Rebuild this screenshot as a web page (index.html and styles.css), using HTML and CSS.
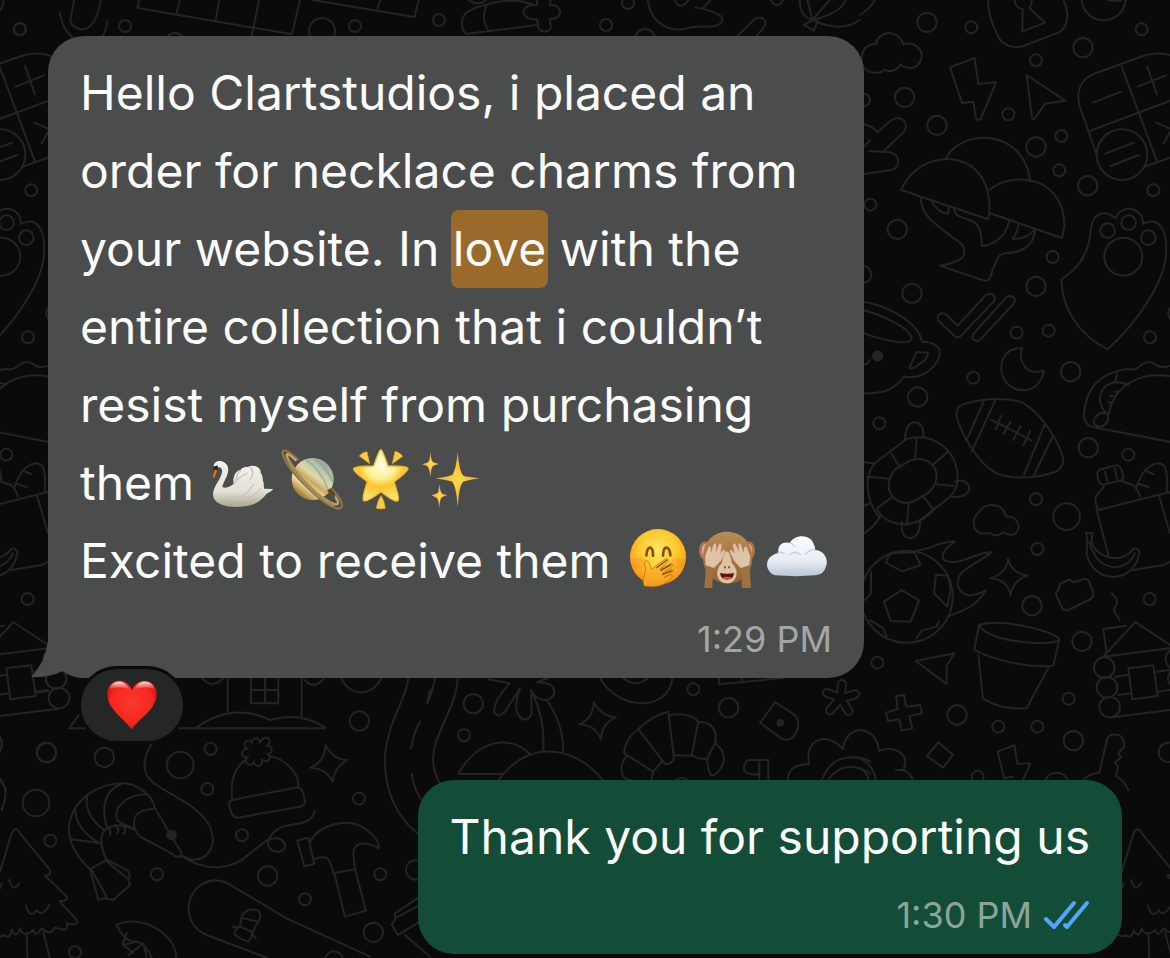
FILE: index.html
```html
<!DOCTYPE html>
<html lang="en">
<head>
<meta charset="utf-8">
<meta name="viewport" content="width=device-width, initial-scale=1">
<title>Chat</title>
<link rel="stylesheet" href="styles.css">
</head>
<body>
<main class="chat">
<svg class="wallpaper" viewBox="0 0 1170 958" preserveAspectRatio="xMinYMin slice" aria-hidden="true">
<g id="edge">
<!-- upper right: clouds, padlock, calculator, mushrooms, paw -->
<g transform="translate(860 0) scale(.3333)">
<circle cx="201" cy="67" r="29"/><circle cx="669" cy="143" r="29"/><circle cx="134" cy="292" r="29"/><circle cx="231" cy="376" r="29"/><circle cx="528" cy="441" r="29"/><circle cx="683" cy="557" r="29"/><circle cx="112" cy="688" r="29"/>
<circle cx="334" cy="82" r="18"/><circle cx="845" cy="88" r="18"/><circle cx="528" cy="181" r="18"/><circle cx="445" cy="343" r="18"/><circle cx="604" cy="408" r="18"/><circle cx="598" cy="511" r="18"/><circle cx="880" cy="571" r="18"/><circle cx="31" cy="614" r="18"/><circle cx="578" cy="771" r="18"/><circle cx="12" cy="300" r="18"/>
<path d="M0 45Q30 25 45 0"/>
<path d="M385 0C382 40 400 80 415 110C430 138 460 146 490 138L595 98C622 85 626 50 618 20L610 0M464 0Q464 20 488 28L487 95L555 68L508 24Q518 12 514 0"/>
<circle cx="731" cy="-5" r="66"/><path d="M745 0Q765 5 785 0"/>
<path d="M48 133C55 90 115 85 130 134C165 120 195 155 182 180C175 207 140 210 120 193C115 212 85 218 74 209C50 230 0 215 5 175C8 145 25 132 48 133Z"/>
<path d="M270 202L344 174L355 252L408 247L363 356Q355 364 348 356L340 305L306 309Z"/>
<path d="M500 225L616 302L555 311L524 356Q519 360 516 354Z"/>
<path d="M0 372Q30 372 52 396L95 360C120 345 150 365 132 395L72 453M28 453L90 457C120 465 125 500 95 510L12 522M12 440L30 420"/>
<path d="M930 165Q890 155 850 168L700 222C665 238 648 270 658 315L710 465M855 500L960 462M785 200L890 482M692 392L990 280M698 308L784 275M833 260L918 226M861 198L891 283M736 461L822 428M751 498L837 465M889 368L935 388L911 430M930 165Q955 172 964 195"/>
<circle cx="786" cy="464" r="76"/>
<path d="M123 570C180 440 380 440 388 610Q390 640 384 658ZM257 476C310 380 490 390 510 538M388 570C460 510 615 530 613 680L606 714L390 640"/>
<path d="M183 592C180 650 240 680 275 710Q315 735 312 750M214 602Q235 640 264 641L268 620M282 627C290 670 350 640 362 700L366 738C410 735 440 700 447 665M476 672Q472 700 458 716Q500 720 524 688M526 690C520 740 480 760 445 758"/>
<path d="M663 780C700 730 685 680 703 655Q730 625 767 655C785 610 850 620 849 672C890 650 920 680 918 745"/>
<circle cx="743" cy="692" r="22"/><circle cx="806" cy="668" r="22"/><circle cx="865" cy="713" r="22"/><circle cx="790" cy="770" r="57"/>
</g>
<!-- middle right: cup, moon, football, taco, turtle, bottle -->
<g transform="translate(860 250) scale(.3333)">
<circle cx="156" cy="130" r="29"/><circle cx="528" cy="109" r="29"/><circle cx="632" cy="365" r="29"/><circle cx="173" cy="441" r="29"/><circle cx="685" cy="593" r="29"/><circle cx="8" cy="73" r="26"/><circle cx="954" cy="190" r="29"/>
<circle cx="470" cy="248" r="18"/><circle cx="566" cy="242" r="18"/><circle cx="870" cy="262" r="18"/><circle cx="340" cy="383" r="18"/><circle cx="58" cy="520" r="18"/><circle cx="528" cy="748" r="18"/><circle cx="805" cy="614" r="18"/><circle cx="620" cy="800" r="40"/>
<path d="M672 20C650 55 630 70 604 88C605 180 660 255 742 298C820 230 925 90 918 -5"/>
<path d="M312 0C320 30 280 40 240 47L370 91Q385 95 390 82C410 30 410 10 445 8Q475 7 490 -3"/>
<path d="M235 212Q228 195 245 190Q253 188 260 195L293 227L378 135Q392 127 402 138Q408 146 400 156L302 258Q293 266 284 258ZM340 252L438 143Q450 132 462 143Q468 152 460 162L360 270Q350 276 340 269Q334 260 340 252Z"/>
<path d="M0 153C80 165 175 215 186 275C220 275 245 290 238 318C225 360 180 388 132 380C100 425 60 432 0 430M0 178C70 195 150 235 155 265C150 290 60 270 0 245M170 306L203 308Q206 315 195 330L165 352Q145 360 150 350ZM0 335Q15 355 30 330"/><circle class="dot" cx="53" cy="318" r="14"/>
<path d="M487 294C400 290 405 420 490 421C525 420 545 395 552 362C500 380 470 330 487 294Z"/>
<path d="M315 461C370 445 430 443 480 455C540 480 600 580 609 625C612 645 600 660 585 666C530 685 460 690 410 670C350 640 300 540 290 500Q285 470 315 461ZM370 457L320 570M405 453L335 605M555 522L492 675M577 562L522 675M392 508L514 571M423 498L408 538M452 515L430 553M482 528L460 570M511 542L490 586"/>
<path d="M940 343Q905 360 885 342Q865 328 840 348Q825 362 800 357C720 370 680 410 672 490Q670 530 710 533L932 576M745 495C765 390 860 365 935 380M805 405C760 385 720 405 720 450Q722 470 735 485M745 495Q745 530 715 530Q690 520 710 497Q730 480 745 495M772 372L765 395M750 437h10M765 425h8M745 457h12"/>
<path d="M140 567C220 545 295 600 293 690Q290 725 265 745L180 810M140 567L50 635C10 670 15 750 60 805M110 655L150 632C200 615 240 650 227 695Q220 720 195 735L160 755C110 770 75 730 90 685Q95 668 110 655ZM170 567L165 625M262 607L222 642M95 612L120 652M22 680L90 686M225 702L280 708M95 742L52 775M188 737L218 775M146 760L141 820M135 567Q138 518 165 517Q192 520 190 560M285 695Q325 685 328 718Q320 745 275 740M12 637L45 641M12 768L30 760"/>
<path d="M712 670Q715 660 725 657L770 646Q785 645 790 685Q790 690 780 692L728 704Q712 700 712 670ZM735 665L742 695M765 655L772 690M733 704Q730 715 710 735Q700 750 715 780M785 693L820 706Q835 720 840 740M830 710C850 650 890 625 915 650Q925 680 920 728M715 780L930 726L960 830M855 662L880 672M838 702L866 711M898 740L930 850"/>
</g>
<!-- lower right: football, pot, cabin, key -->
<g transform="translate(860 510) scale(.3333)">
<circle cx="516" cy="287" r="29"/><circle cx="666" cy="394" r="29"/><circle cx="291" cy="615" r="29"/><circle cx="640" cy="692" r="29"/><circle cx="925" cy="727" r="29"/><circle cx="590" cy="825" r="37"/>
<circle cx="532" cy="117" r="18"/><circle cx="869" cy="267" r="18"/><circle cx="52" cy="458" r="18"/><circle cx="626" cy="566" r="18"/><circle cx="415" cy="650" r="18"/><circle cx="532" cy="650" r="18"/><circle cx="353" cy="800" r="18"/>
<path d="M52 0Q80 45 145 43Q190 35 220 0M126 35Q120 80 150 85Q180 80 180 35M12 70Q45 50 62 15"/>
<path d="M360 2C380 -25 430 -20 438 20C470 15 490 55 465 70Q450 80 430 66Q410 85 390 68C340 85 325 30 360 2"/>
<path d="M710 0L745 135M820 180L910 165Q928 160 940 145M678 68L698 70Q695 85 695 100C720 150 790 160 818 118Q830 110 838 125C830 220 700 230 680 130L682 95ZM688 95C710 190 800 190 825 130"/>
<circle cx="140" cy="260" r="138"/>
<path d="M125 240L177 272L152 335L92 333L72 275ZM90 130L163 127L182 165L127 184L77 158ZM228 194L264 197L272 240L262 290L222 250ZM33 185V250L15 270M30 330L70 355L80 380M237 333L230 350L185 362L170 385"/>
<path d="M170 122C220 115 250 90 285 95C230 135 240 160 290 155C340 145 360 125 395 127C330 175 290 180 293 225C305 265 340 260 376 242C350 290 310 300 268 318"/>
<path d="M444 147Q455 190 503 197Q460 210 451 256Q445 210 392 205Q440 190 444 147Z"/>
<path d="M600 222L628 208L640 217L675 206Q683 206 688 215L700 250Q702 260 692 267L625 300Q612 305 605 290L588 255Q588 245 595 240Z"/>
<path d="M755 250Q778 270 768 285Q755 305 772 318L779 332"/>
<path d="M357 345C420 325 580 360 598 388C590 410 380 400 357 345L343 420C400 450 500 475 580 467L598 388M355 435L369 565Q420 600 500 595L567 470"/>
<path d="M167 453L284 430L260 467L260 522Z"/>
<path d="M108 558L132 555L138 590L180 585L186 610L148 618L157 655L125 662L118 628L84 634L78 608L113 598Z"/>
<path d="M730 440L826 336L930 405M730 440L930 415M740 430L730 357L798 347M765 500L805 495M890 485L930 480M773 555L813 550M892 545L930 540M805 475L880 466L893 558L817 568ZM755 622L930 600"/>
<circle cx="733" cy="473" r="31"/><circle cx="741" cy="532" r="31"/><circle cx="749" cy="591" r="31"/><circle cx="948" cy="447" r="31"/><circle cx="955" cy="505" r="31"/>
<path d="M235 697L279 735L249 773L201 738ZM413 725L464 706L472 762L511 760L485 820M413 725L432 805L460 800"/>
<path d="M665 815Q685 790 718 788L742 685Q750 670 775 675Q795 685 792 710L775 730L783 742L765 758L775 772L768 798Q795 815 805 840"/>
<path d="M0 660Q50 665 57 722C110 705 150 735 130 780Q155 790 160 815M0 745Q40 765 48 810M0 775Q20 785 28 812M130 780H108"/>
</g>
</g>
<use href="#edge" x="-1122"/>
<!-- lower left: hut, shrimp, hat, hammer, snowboard -->
<g transform="translate(0 640) scale(.3333)">
<circle cx="168" cy="115" r="31"/><circle cx="177" cy="174" r="31"/><path d="M105 108L140 103M110 158L145 152M140 211L175 207"/>
<circle cx="140" cy="338" r="29"/><circle cx="313" cy="352" r="29"/><circle cx="1078" cy="243" r="29"/><circle cx="803" cy="708" r="29"/><circle cx="1120" cy="877" r="29"/><circle cx="1247" cy="690" r="29"/><circle cx="108" cy="489" r="40"/><circle cx="541" cy="375" r="40"/>
<circle cx="632" cy="327" r="18"/><circle cx="622" cy="447" r="18"/><circle cx="726" cy="586" r="18"/><circle cx="151" cy="602" r="18"/><circle cx="471" cy="703" r="18"/><circle cx="1077" cy="476" r="18"/><circle cx="1141" cy="703" r="18"/><circle cx="915" cy="778" r="18"/><circle cx="225" cy="937" r="18"/><circle cx="1002" cy="960" r="26"/>
<path d="M207 265H975M207 265L245 215M590 262C640 225 720 195 810 240Q900 215 975 262M683 115V215M905 115V230M753 115V190H835V115M795 115V190M753 150H835M605 112Q635 150 670 115M915 120Q940 150 970 118M1022 112Q1045 158 1085 157Q1125 155 1145 112"/>
<path d="M1225 115C1220 180 1150 260 1155 380C1160 480 1210 550 1260 585M1290 150L1282 190M1260 245Q1240 280 1233 325M1235 402Q1245 460 1270 485"/>
<path d="M977 316Q1000 360 1043 360Q1003 380 998 426Q980 385 932 383Q975 365 977 316Z"/>
<path d="M455 312C420 370 430 410 470 435C520 470 600 500 630 560C655 620 620 665 570 658L540 645C620 700 700 690 750 640L800 602C850 575 875 630 835 635C790 635 800 590 830 570C860 540 930 570 945 512"/>
<path d="M540 650Q528 655 515 640L420 590C390 560 400 520 430 512L465 505L545 640M465 505C455 455 400 430 370 430C300 430 230 470 210 540C195 600 230 650 270 688L320 660Q300 620 305 590C310 560 350 545 400 568M440 462C370 465 335 510 355 545L400 565M365 432C310 450 305 510 320 560M262 470C250 510 290 560 315 570M225 510C230 570 280 600 300 610M215 598L302 610M270 688L295 780L315 775L340 780L390 735L385 720Q395 700 380 690L322 660M275 690L320 770M322 665L385 718M322 562Q335 570 330 585M345 555Q360 565 352 580M362 555Q385 565 370 582"/><circle class="dot" cx="515" cy="585" r="13"/>
<path d="M697 480C685 390 730 345 790 347C850 345 900 400 895 442M697 480L885 443Q905 440 910 460L915 485Q915 495 900 500L715 533Q698 535 692 510Q680 485 697 480"/>
<path class="petal-out" d="M771 336L797 305M771 336L803 330M771 336L797 352M771 336L774 366M771 336L750 362M771 336L738 340M771 336L746 314M771 336L768 307"/><path class="petal-in" d="M771 336L797 305M771 336L803 330M771 336L797 352M771 336L774 366M771 336L750 362M771 336L738 340M771 336L746 314M771 336L768 307"/>
<path d="M892 602L925 593L943 672L913 679ZM930 605C960 550 1050 530 1100 570Q1140 600 1137 625C1090 600 1060 610 1060 640L1065 688L1000 700C990 650 980 645 940 657M1003 700L1035 830L1098 812L1065 688"/>
<path d="M800 953L620 885C560 860 550 790 590 745Q640 700 700 740L860 835L1110 950M705 885Q700 870 720 860L725 830Q740 800 775 812Q790 830 765 860L750 900Q740 910 705 885ZM720 860L755 875M730 835L772 845M698 860L712 862M755 880L768 895"/>
<path id="tree" d="M0 695L35 580Q48 555 60 580L150 690Q155 705 135 707L200 770Q205 785 178 783L230 840Q240 860 200 850Q210 880 165 862Q150 890 125 865Q105 895 100 870Q70 895 60 865Q50 900 35 870Q30 900 10 885Q5 895 -20 880Q-40 895 -50 860M80 880L82 953M130 880L150 953M27 720Q40 760 57 730M78 797Q90 840 110 810Q125 835 148 795M0 745L5 730"/>
<use href="#tree" x="3366"/>
<path d="M350 855C420 820 530 880 528 953M350 855Q370 900 400 905Q430 900 455 953M370 915L410 905M385 945L430 910M380 880L368 912L400 940M430 910L440 953"/>
<path d="M1260 770L1185 820V835L1260 795M1185 838L1175 855L1195 885L1260 845M1215 885L1290 950M0 290Q10 310 0 335M0 415Q30 450 5 510"/>
</g>
<!-- between the bubbles: palm, croissant, tag, flower -->
<g transform="translate(420 650) scale(.3333)">
<circle cx="160" cy="161" r="29"/><circle cx="926" cy="173" r="29"/><circle cx="132" cy="256" r="18"/><circle cx="820" cy="118" r="18"/>
<path d="M205 88L268 100Q225 150 222 180Q230 210 255 185L300 115Q280 170 295 195Q320 225 335 190L333 120C350 160 405 160 403 120Q395 95 350 97L385 84M335 125Q375 200 370 305M380 150Q430 220 430 305M235 392C310 280 450 270 550 392M115 372C170 270 270 250 333 315M115 372H250M113 84C110 180 30 260 40 340Q42 370 60 400M45 84Q40 120 22 160"/>
<path d="M522 157Q545 200 588 202Q545 220 543 268Q525 225 478 223Q520 205 522 157Z"/>
<path d="M540 84C600 190 750 180 757 84M610 84Q645 115 685 84M897 84V103L1090 84M965 84v10"/>
<path d="M655 237Q700 195 745 185L762 325Q755 345 735 342ZM750 195Q810 185 835 215Q880 215 888 255L885 280Q925 310 905 350Q890 380 872 375Q860 350 862 325Q840 330 820 318L765 316M655 237Q615 265 612 310L700 365L725 335M620 318Q595 350 610 380Q620 390 650 395M700 365L692 395M835 215L815 318M888 275L862 325M765 392Q785 375 805 392"/>
<path d="M1066 157L1125 195Q1150 230 1115 265Q1095 275 1080 262L1020 218Z"/><circle class="dot" cx="1081" cy="218" r="8"/>
<path class="petal-out" d="M1262 145L1266 102M1262 145L1305 133M1262 145L1286 183M1262 145L1230 181M1262 145L1221 128"/><path class="petal-in" d="M1262 145L1266 102M1262 145L1305 133M1262 145L1286 183M1262 145L1230 181M1262 145L1221 128"/>
<path d="M1103 390C1105 350 1140 340 1168 343C1150 270 1220 240 1268 297Q1280 240 1325 240M1205 390Q1230 325 1290 322Q1330 322 1350 335M1225 390Q1250 350 1295 350Q1330 355 1350 370M1045 390V330H985Q965 345 975 365Q985 375 1015 373M1018 330V390"/>
</g>
<!-- top edge -->
<g transform="translate(60 0) scale(.5102 .3333)">
<path d="M28 0L20 60Q25 88 45 88Q70 85 80 0M0 40Q5 90 25 112M92 62Q92 90 82 112M155 0L152 24L455 103L470 0M235 0L228 42M312 0L305 62M390 0L376 108M495 0L695 51L703 0M628 0L622 26"/>
<path d="M795 102Q780 70 795 40Q810 22 835 15Q860 0 900 3L925 12M800 0Q820 20 835 0M795 102L935 75M835 18Q825 60 840 92M935 0V15Q910 15 908 35Q912 60 935 58L938 85Q950 105 962 85L960 58Q982 55 980 35Q978 12 960 15L962 0"/>
<path d="M1152 0C1155 50 1180 95 1220 88Q1240 78 1265 80Q1300 80 1298 55Q1295 38 1245 22M1205 0Q1215 35 1232 0M1275 0L1260 25M1328 108L1358 62Q1375 42 1383 65Q1383 80 1365 108M1450 0Q1450 50 1475 60L1508 0M1475 60Q1530 40 1540 0M1475 60Q1530 100 1568 60M1475 60L1458 75L1478 92L1485 62M1465 0L1475 60"/>
</g>
<circle cx="125" cy="26" r="6"/><circle cx="355" cy="26" r="6"/><circle cx="439" cy="20" r="6"/><circle cx="606" cy="25" r="6"/><circle cx="628" cy="3" r="6"/><circle cx="777" cy="-1" r="6"/><circle cx="322" cy="31" r="13"/><circle cx="175" cy="43" r="10"/><circle cx="645" cy="39" r="10"/><circle cx="20" cy="29" r="6"/>
</svg>

<article class="message incoming">
<svg class="tail" viewBox="0 0 60 60" aria-hidden="true"><path d="M18 0V22C16 38 11 48 1 59Q19 60 33 53Q42 60 54 60H60V0Z"/></svg>
<p class="text">Hello Clartstudios, i placed an order for necklace charms from your website. In <mark class="match">love</mark> with the entire collection that i couldn’t resist myself from purchasing them<span class="emojis">
<svg class="emoji" viewBox="27 30 192 192" role="img" aria-label="swan">
<defs><linearGradient id="sw" x1="0" y1="0" x2="0" y2="1"><stop stop-color="#f4f2ec"/><stop offset=".65" stop-color="#e4e1d8"/><stop offset="1" stop-color="#aaa58f"/></linearGradient></defs>
<path fill="url(#sw)" d="M38 83C40 66 66 63 78 81C91 103 66 130 64 147C76 153 88 145 98 138C94 121 103 96 119 96C124 85 141 88 149 84C166 80 181 93 179 104C187 113 184 127 188 134L189 152L216 153Q215 158 197 167C180 190 157 207 105 207C66 207 37 194 36 171C36 142 67 119 63 95Q55 80 47 94Z"/>
<path d="M98 139Q111 117 140 105M89 175Q125 190 158 139M104 187Q151 187 180 151M119 96Q105 110 106 128M148 87Q163 105 147 125" fill="none" stroke="#c9c5b8" stroke-width="4"/>
<path fill="#ec6c18" d="M42 94L49 97L40 119L35 116Z"/><path fill="#252525" d="M37 87L45 83L51 83L49 98L42 94L38 101Z"/>
</svg><svg class="emoji" viewBox="237 30 192 192" role="img" aria-label="ringed planet">
<defs><linearGradient id="pl" x1=".85" y1=".1" x2=".25" y2=".9"><stop stop-color="#91a291"/><stop offset=".25" stop-color="#bcc7ae"/><stop offset=".45" stop-color="#ded9a5"/><stop offset=".6" stop-color="#c9a962"/><stop offset=".75" stop-color="#eee0aa"/><stop offset="1" stop-color="#a97e35"/></linearGradient></defs>
<circle cx="335" cy="123" r="63" fill="url(#pl)"/><path d="M315 66Q355 90 382 155M342 64Q374 84 396 132" stroke="#809990" stroke-width="6" opacity=".5" fill="none"/>
<path d="M292 67C258 32 237 28 247 54C263 99 361 199 407 211C438 216 420 178 389 151" fill="none" stroke="#8e7345" stroke-width="7"/><path d="M286 68C261 43 251 42 261 63C285 107 361 187 402 199C421 202 407 177 389 163" fill="none" stroke="#c1a66d" stroke-width="7"/><path d="M262 68C288 112 340 172 398 203" fill="none" stroke="#a88c55" stroke-width="9"/><path d="M388 151Q405 163 402 180L378 158Z" fill="#604421"/>
</svg><svg class="emoji" viewBox="447 30 192 192" role="img" aria-label="glowing star">
<defs><radialGradient id="st" cx=".5" cy=".3" r=".65"><stop stop-color="#fffde9"/><stop offset=".4" stop-color="#fff197"/><stop offset=".65" stop-color="#fcc52b"/><stop offset="1" stop-color="#fae06b"/></radialGradient></defs>
<g fill="#f8cc41" stroke="#e9a51f" stroke-width="2" stroke-linejoin="round"><path d="M475 54Q484 42 498 41L506 77ZM582 40Q597 43 605 55L574 77ZM540 173Q550 187 553 211Q540 214 526 211Q530 187 540 173Z"/></g>
<path fill="url(#st)" stroke="#f4b529" stroke-width="4" stroke-linejoin="round" d="M540 35Q544 34 561 84Q616 83 621 91Q624 98 579 132Q598 184 590 189Q580 193 540 161Q498 193 488 188Q482 180 499 131Q454 99 458 92Q463 84 518 84Q535 33 540 35Z"/>
</svg><svg class="emoji" viewBox="657 30 192 192" role="img" aria-label="sparkles">
<defs><radialGradient id="sp"><stop stop-color="#ffdf54"/><stop offset=".45" stop-color="#ffc12f"/><stop offset="1" stop-color="#e8a262"/></radialGradient></defs>
<path fill="url(#sp)" d="M770 43Q776 111 790 115L836 121Q796 127 786 132Q774 142 770 209Q766 142 752 130L704 121Q742 116 754 111Q765 96 770 43Z"/><path fill="url(#sp)" d="M688 40Q690 70 697 73L714 78Q698 82 694 86Q689 97 688 117Q686 92 679 84L663 79Q681 75 684 70Q687 62 688 40Z"/><path fill="url(#sp)" d="M715 139Q718 166 725 168L739 172Q723 176 719 182Q716 192 715 210Q713 187 708 180L691 172Q709 168 712 163Z"/>
</svg></span><br>Excited to receive them<span class="emojis">
<svg class="emoji" viewBox="21 24 192 192" role="img" aria-label="face with hand over mouth">
<defs><radialGradient id="fa" cx=".5" cy=".38" r=".62"><stop stop-color="#ffe866"/><stop offset=".6" stop-color="#ffc629"/><stop offset="1" stop-color="#f28b16"/></radialGradient><linearGradient id="ha" x1="0" y1="0" x2="0" y2="1"><stop stop-color="#ffc72b"/><stop offset="1" stop-color="#f29a1e"/></linearGradient></defs>
<circle cx="117" cy="117" r="84" fill="url(#fa)"/><ellipse cx="60" cy="136" rx="22" ry="17" fill="#fa7826" opacity=".28"/><ellipse cx="176" cy="136" rx="20" ry="17" fill="#fa7826" opacity=".28"/>
<path d="M82 112Q85 88 93 89Q102 90 102 113M132 113Q133 89 142 89Q153 91 154 112" fill="none" stroke="#8b4b0a" stroke-width="8" stroke-linecap="round"/>
<path fill="url(#ha)" stroke="#b5670c" stroke-width="2" d="M76 204C67 190 78 171 80 153L76 134Q83 121 91 135L98 154L138 123Q149 119 148 130L123 153L155 136Q165 137 161 145L130 166L158 153Q169 154 164 161L136 178L155 170Q163 172 157 181C138 202 110 211 76 204Z"/><path d="M112 150L145 125M124 158L157 140M130 170L160 158" stroke="#864609" stroke-width="4"/>
</svg><svg class="emoji" viewBox="231 24 192 192" role="img" aria-label="see-no-evil monkey">
<defs><linearGradient id="mo" x1="0" y1="0" x2="0" y2="1"><stop stop-color="#b98b56"/><stop offset="1" stop-color="#926335"/></linearGradient></defs>
<ellipse cx="258" cy="98" rx="18" ry="28" fill="#a57545"/><ellipse cx="390" cy="98" rx="18" ry="28" fill="#a57545"/><ellipse cx="258" cy="98" rx="10" ry="20" fill="#ef9fa4"/><ellipse cx="390" cy="98" rx="10" ry="20" fill="#ef9fa4"/>
<path fill="url(#mo)" d="M252 120C250 15 398 15 400 120Q398 193 324 197Q255 190 252 120Z"/><path fill="#ddc3a3" d="M324 100Q335 105 338 135Q359 155 351 177Q342 197 323 196Q301 195 295 174Q292 150 309 135Q312 105 324 100Z"/>
<path fill="#551911" d="M303 165Q324 170 345 165Q344 184 324 185Q305 184 303 165Z"/><ellipse cx="324" cy="180" rx="12" ry="4" fill="#dc4c4b"/><path d="M318 145V151M330 145V151" stroke="#71472f" stroke-width="5"/>
<path fill="#9f7040" d="M256 210L261 138L286 145Q279 175 280 210ZM396 210L391 138L365 145Q369 175 368 210Z"/>
<g fill="#dfc4a8" stroke="#bd9470" stroke-width="1"><path d="M260 142L258 116L268 88Q273 83 276 89L276 104L284 78Q292 73 292 82L291 101L301 77Q309 75 308 83L305 106L313 96Q319 92 318 102L306 128L285 150Z"/><path d="M391 142L394 116L384 88Q378 83 375 89L374 104L365 78Q358 73 358 82L360 101L349 77Q341 75 342 83L346 106L337 96Q332 92 333 102L345 128L365 150Z"/></g>
</svg><svg class="emoji" viewBox="441 24 192 192" role="img" aria-label="cloud">
<defs><linearGradient id="cl" x1="0" y1="0" x2="0" y2="1"><stop stop-color="#fbfdff"/><stop offset=".6" stop-color="#e8edf4"/><stop offset="1" stop-color="#bac7d6"/></linearGradient></defs>
<path fill="url(#cl)" d="M469 172C440 163 435 125 461 112Q469 106 478 105C475 78 494 69 513 75C526 46 579 48 585 82Q590 88 587 96C615 96 630 125 621 145Q616 169 590 172Q530 177 469 172Z"/><path d="M478 105Q487 100 495 106M513 75Q521 77 526 85M511 111Q527 96 544 109M587 96Q570 94 561 108" fill="none" stroke="#cbd5e0" stroke-width="5" stroke-linecap="round"/>
</svg></span></p>
<footer class="meta"><time datetime="13:29">1:29 PM</time></footer>
</article>
<button class="reaction" type="button" aria-label="Red heart reaction">
<svg class="heart" viewBox="108 92 154 154" aria-hidden="true"><defs><radialGradient id="he" cx=".5" cy=".45" r=".6"><stop stop-color="#fa382d"/><stop offset=".7" stop-color="#f6271f"/><stop offset="1" stop-color="#bd0909"/></radialGradient><linearGradient id="hl" x1="0" y1="0" x2="0" y2="1"><stop stop-color="#fff" stop-opacity=".85"/><stop offset="1" stop-color="#fff" stop-opacity="0"/></linearGradient></defs>
<path fill="url(#he)" d="M184 243Q177 230 151 205C125 181 111 160 112 134C112 91 167 81 185 125C202 82 258 91 258 135C258 163 241 184 216 206Q190 231 184 243Z"/><path fill="url(#hl)" d="M118 124C122 94 164 88 177 124Q148 109 118 124ZM192 124C204 88 249 95 252 124Q222 109 192 124Z"/></svg>
</button>
<article class="message outgoing">
<p class="text">Thank you for supporting us</p>
<footer class="meta"><time datetime="13:30">1:30 PM</time><svg class="read" viewBox="0 0 48 32" role="img" aria-label="Read"><path d="M4 20L12 28L32 4M23 26L25 28L45 4"/></svg></footer>
</article>
</main>
</body>
</html>
```
FILE: styles.css
```css
* {
  box-sizing: border-box;
}

body {
  margin: 0;
  background: #0a0a0a;
  color: #fcfcfc;
  font-family: Inter, "Liberation Sans", sans-serif;
}

.chat {
  position: relative;
  display: flex;
  flex-direction: column;
  min-height: 100vh;
  padding: 36px 48px 4px;
  overflow: hidden;
}

.wallpaper {
  position: absolute;
  top: 0;
  left: 0;
  width: 100%;
  height: 100%;
  fill: none;
  stroke: #242424;
  stroke-width: 2px;
  stroke-linecap: round;
  stroke-linejoin: round;
}

.wallpaper path,
.wallpaper circle {
  vector-effect: non-scaling-stroke;
}

.wallpaper .dot {
  fill: #242424;
}

.wallpaper .petal-out {
  stroke-width: 10px;
}

.wallpaper .petal-in {
  stroke: #0a0a0a;
  stroke-width: 6px;
}

.message {
  position: relative;
  padding: 18px 32px 12px;
  border-radius: 36px;
}

.incoming {
  align-self: flex-start;
  max-width: 816px;
  background: #4b4d4c;
}

.outgoing {
  align-self: flex-end;
  background: #144d37;
}

.tail {
  position: absolute;
  left: -18px;
  bottom: 0;
  width: 60px;
  height: 60px;
  fill: #4b4d4c;
}

.text {
  position: relative;
  margin: 0;
  font-size: 48px;
  line-height: 78px;
}

.match {
  display: inline-block;
  border-radius: 8px;
  background: #9a6a2b;
  box-shadow: -2px 0 #9a6a2b, 2px 0 #9a6a2b;
  color: inherit;
}

.emojis {
  margin-left: 2px;
  white-space: nowrap;
}

.emoji {
  width: 64px;
  height: 64px;
  vertical-align: -12px;
}

.emoji + .emoji {
  margin-left: 6px;
}

.meta {
  display: flex;
  justify-content: flex-end;
  align-items: center;
  gap: 10px;
  padding-top: 12px;
  color: #a4a6a5;
  font-size: 36px;
  line-height: 54px;
}

.outgoing .meta {
  color: #8aa69b;
}

.read {
  width: 48px;
  height: 32px;
  fill: none;
  stroke: #53a6fd;
  stroke-width: 4px;
  stroke-linecap: round;
  stroke-linejoin: round;
}

.reaction {
  position: relative;
  display: flex;
  align-items: center;
  justify-content: center;
  width: 108px;
  height: 78px;
  margin: -12px 0 36px 30px;
  padding: 0;
  border: 3px solid #0a0a0a;
  border-radius: 39px;
  background: #252726;
}

.heart {
  width: 52px;
  height: 52px;
}
```
